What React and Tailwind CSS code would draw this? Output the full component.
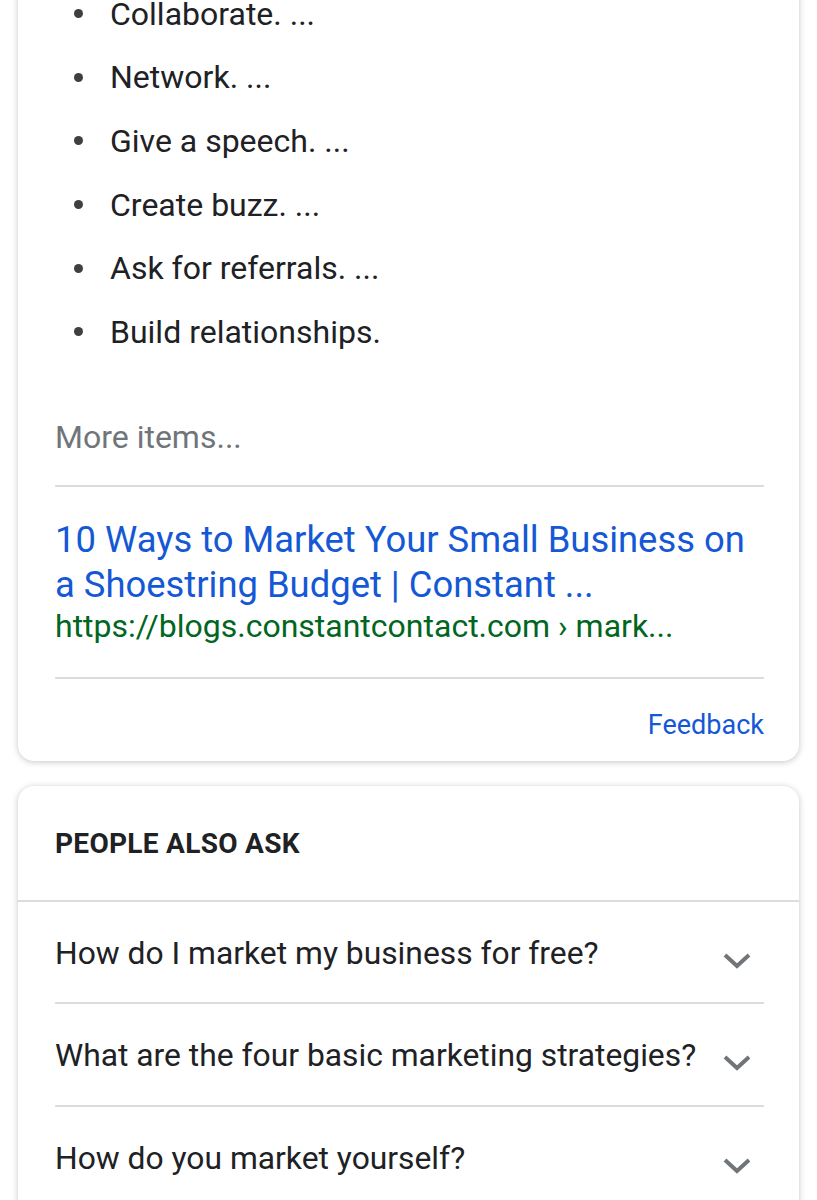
import React from "react";

const Chevron = () => (
  <svg width="30" height="18" viewBox="0 0 30 18" className="shrink-0">
    <path d="M3 3 L15 14 L27 3" fill="none" stroke="#70757a" strokeWidth="4" strokeLinecap="butt" />
  </svg>
);

export default function App() {
  const items = [
    "Collaborate. ...",
    "Network. ...",
    "Give a speech. ...",
    "Create buzz. ...",
    "Ask for referrals. ...",
    "Build relationships.",
  ];
  const questions = [
    "How do I market my business for free?",
    "What are the four basic marketing strategies?",
    "How do you market yourself?",
  ];
  return (
    <div className="w-[817px] h-[1200px] overflow-hidden bg-white" style={{ fontFamily: "Roboto, 'Noto Sans', sans-serif" }}>
      <div className="mx-[18px] -mt-[30px] bg-white rounded-b-[16px] shadow-[0_1px_6px_rgba(32,33,36,0.26)] pl-[37px] pr-[35px]">
        <ul className="pt-[12px]">
          {items.map((t) => (
            <li key={t} className="flex items-center h-[63.6px] text-[32px] text-[#202124]">
              <span className="w-[9px] h-[9px] rounded-full bg-[#3c4043] ml-[19px] mr-[27px]" />
              <span>{t}</span>
            </li>
          ))}
        </ul>
        <div className="pt-[55px] pb-[30px] text-[32px] leading-[36px] text-[#70757a]">More items...</div>
        <div className="h-[2px] bg-[#dadce0]" />
        <div className="pt-[30px] pb-[32px]">
          <div className="text-[36.4px] leading-[45px] text-[#1558d6]">
            10 Ways to Market Your Small Business on a Shoestring Budget | Constant ...
          </div>
          <div className="text-[32px] leading-[38px] text-[#006621]">https://blogs.constantcontact.com › mark...</div>
        </div>
        <div className="h-[2px] bg-[#dadce0]" />
        <div className="flex justify-end pt-[28px] pb-[18px]">
          <span className="text-[27px] leading-[36px] text-[#1558d6]">Feedback</span>
        </div>
      </div>

      <div className="mx-[18px] mt-[25px] bg-white rounded-t-[16px] shadow-[0_1px_6px_rgba(32,33,36,0.26)]">
        <div className="px-[37px] pt-[41px] pb-[39px] text-[28px] leading-[34px] font-bold text-[#202124] tracking-[0.3px]">
          PEOPLE ALSO ASK
        </div>
        <div className="h-[2px] bg-[#dadce0]" />
        <div className="pl-[37px] pr-[35px]">
          {questions.map((q, i) => (
            <div key={q}>
              {i > 0 && <div className="h-[2px] bg-[#dadce0]" />}
              <div className="flex items-center justify-between h-[100.5px] pt-[4px]">
                <span className="text-[31.8px] text-[#202124]">{q}</span>
                <span className="mr-[12px] mt-[14px]"><Chevron /></span>
              </div>
            </div>
          ))}
        </div>
      </div>
    </div>
  );
}
